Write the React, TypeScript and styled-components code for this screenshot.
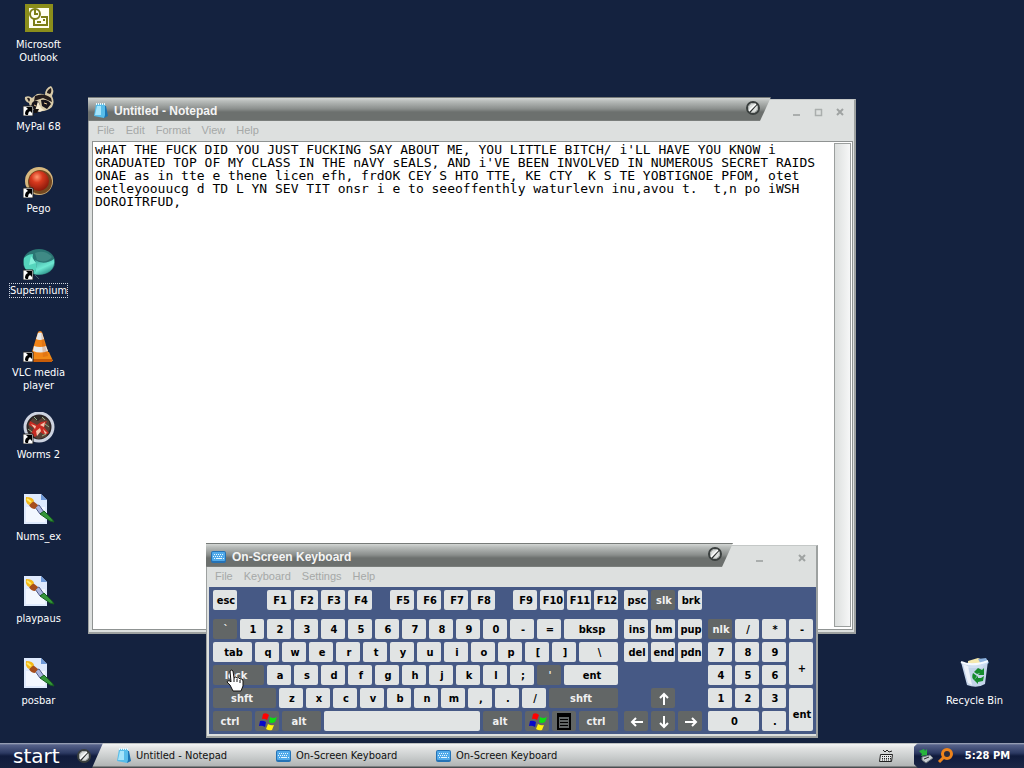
import React from "react";
import styled, { createGlobalStyle, css } from "styled-components";

const GlobalStyle = createGlobalStyle`
  * { box-sizing: border-box; }
  body { margin: 0; background: #14223f; }
  button, textarea { font: inherit; margin: 0; padding: 0; border: 0; }
`;

const uiFont = css`
  font-family: "DejaVu Sans Condensed", "DejaVu Sans", sans-serif;
`;

const Screen = styled.div`
  display: flex;
  flex-direction: column;
  min-height: 100vh;
  background: #14223f;
  font-size: 11px;
  line-height: 13px;
  ${uiFont}
`;

const Desktop = styled.main`
  position: relative;
  flex: 1;
  display: flex;
  justify-content: space-between;
  align-items: flex-start;
  padding: 2px 12px 3px 1px;
`;

const IconColumn = styled.div<{ $bottom?: boolean }>`
  display: flex;
  flex-direction: column;
  align-self: ${(p) => (p.$bottom ? "flex-end" : "flex-start")};
`;

const Shortcut = styled.button`
  width: 75px;
  height: 82px;
  display: flex;
  flex-direction: column;
  align-items: center;
  justify-content: flex-start;
  gap: 3px;
  background: none;
  color: #fff;
`;

const ShortcutLabel = styled.span<{ $focused?: boolean }>`
  border: 1px ${(p) => (p.$focused ? "dotted #cfd6e2" : "solid transparent")};
  text-align: center;
`;

const Window = styled.section`
  position: absolute;
  display: flex;
  flex-direction: column;
`;

const NotepadWindow = styled(Window)`
  left: 88px;
  top: 97px;
  width: 75%;
  height: 537px;
`;

const KeyboardWindow = styled(Window)`
  left: 206px;
  top: 543px;
`;

const Header = styled.header`
  display: flex;
  height: 24px;
`;

const TitleBar = styled.div`
  flex: 1;
  display: flex;
  align-items: center;
  gap: 5px;
  padding: 3px 10px 0 5px;
  clip-path: polygon(0 0, 100% 0, calc(100% - 11px) 100%, 0 100%);
  background: linear-gradient(#777b79 0, #777b79 1px, #d3d6d4 1px, #b9bdbb 4px, #8a8e8c 12px, #6c706e 15px, #6c706e 23px, #888c8a 24px);
`;

const Title = styled.h1`
  flex: 1;
  margin: 0;
  font: bold 12px/14px "Liberation Sans", Arial, sans-serif;
  color: #f4f4f4;
`;

const Emblem = styled.span`
  display: flex;
  align-self: flex-start;
`;

const Controls = styled.div`
  display: flex;
  align-items: center;
  justify-content: flex-end;
  gap: 8px;
  width: 97px;
  margin: 2px 0 0 -12px;
  padding: 2px 7px 0 0;
  background: #dde0df;
  border-top: 1px solid #c4c8c7;
  border-right: 2px solid #9da1a0;
`;

const ControlButton = styled.button<{ $wide?: boolean }>`
  display: flex;
  width: 14px;
  height: 14px;
  margin-right: ${(p) => (p.$wide ? 21 : 0)}px;
  background: none;
`;

const Frame = styled.div`
  flex: 1;
  display: flex;
  flex-direction: column;
  background: #dde0df;
  border: solid #9da1a0;
  border-width: 0 2px 2px 1px;
`;

const MenuBar = styled.nav`
  display: flex;
  align-items: center;
  gap: 11px;
  height: 20px;
  padding: 0 8px 2px;
`;

const MenuItem = styled.button`
  background: none;
  color: #a5a8a7;
  font: 11px/13px "Liberation Sans", Arial, sans-serif;
`;

const Editor = styled.div`
  flex: 1;
  display: flex;
  margin: 0 1px 2px 3px;
  background: #fff;
  border: 1px solid #8f9392;
`;

const TextBox = styled.textarea`
  flex: 1;
  min-width: 0;
  padding: 1px 0 0 2px;
  resize: none;
  outline: none;
  overflow: hidden;
  white-space: pre;
  background: #fff;
  color: #000;
  font: 13px/13px "DejaVu Sans Mono", monospace;
`;

const ScrollTrack = styled.div`
  width: 17px;
  margin: 1px 1px 2px 0;
  border: 1px solid #9b9f9e;
  background: linear-gradient(90deg, #dcdfde, #f6f7f7);
`;

const KeyBoard = styled.div`
  display: flex;
  gap: 6px;
  margin: 0 0 2px 2px;
  padding: 3px 3px 3px 4px;
  background: #465985;
`;

const Block = styled.div`
  display: flex;
  flex-direction: column;
  gap: 3px;
`;

const KeyRow = styled.div<{ $top?: boolean }>`
  display: flex;
  gap: 3px;
  height: 20px;
  margin-bottom: ${(p) => (p.$top ? 6 : 0)}px;
`;

const NumPad = styled.div`
  display: grid;
  grid-template-columns: repeat(4, 24px);
  grid-template-rows: repeat(5, 20px);
  gap: 3px;
  padding-top: 29px;
`;

const Key = styled.button<{ $w?: number; $dark?: boolean; $rows?: number; $cols?: number }>`
  display: flex;
  align-items: center;
  justify-content: center;
  flex: none;
  width: ${(p) => (p.$cols || p.$rows ? "auto" : `${p.$w ?? 24}px`)};
  grid-row: ${(p) => (p.$rows ? `span ${p.$rows}` : "auto")};
  grid-column: ${(p) => (p.$cols ? `span ${p.$cols}` : "auto")};
  padding: ${(p) => (p.$rows ? "10px 0 0 2px" : p.$dark && p.$w ? "1px 5px 0 0" : "1px 0 0 2px")};
  border-radius: 2px;
  background: ${(p) => (p.$dark ? "#626666" : "#e1e4e4")};
  color: ${(p) => (p.$dark ? "#f0f0f0" : "#000")};
  font-weight: bold;
  font-size: 11px;
  white-space: nowrap;
`;

const Spacer = styled.span<{ $w: number }>`
  flex: none;
  width: ${(p) => p.$w}px;
`;

const Pointer = styled.div`
  position: absolute;
  left: 226px;
  top: 669px;
`;

const Taskbar = styled.footer`
  display: flex;
  height: 25px;
  background: linear-gradient(#8d9291 0, #f2f4f4 1px, #e1e3e3 5px, #b1b5b5 23px, #4a4d50 24px);
`;

const StartButton = styled.button`
  display: flex;
  align-items: center;
  justify-content: space-between;
  width: 103px;
  padding: 0 11px 0 13px;
  clip-path: polygon(0 0, 100% 0, calc(100% - 11px) 100%, 0 100%);
  background: linear-gradient(#a9b0c0 0, #56628a 2px, #2c3962 10px, #101b3d 13px, #16213f 25px);
  color: #fff;
  font: 20px/20px "DejaVu Sans", sans-serif;
`;

const Tasks = styled.div`
  flex: 1;
  display: flex;
  padding-left: 13px;
`;

const Task = styled.button`
  display: flex;
  align-items: center;
  gap: 4px;
  width: 160px;
  background: none;
  color: #101010;
`;

const TrayTool = styled.button`
  display: flex;
  align-items: center;
  width: 35px;
  background: none;
`;

const Tray = styled.div`
  display: flex;
  align-items: center;
  gap: 3px;
  padding: 0 14px 0 5px;
  clip-path: polygon(4px 0, 100% 0, 100% 100%, 4px 100%, 0 calc(100% - 4px), 0 4px);
  background: linear-gradient(#a9b0c0 0, #56628a 2px, #2c3962 10px, #101b3d 13px, #1c2746 25px);
`;

const Clock = styled.time`
  margin-left: 8px;
  color: #fff;
  font-weight: bold;
`;

const Arrow = () => (
  <g>
    <path d="M0 22h10v10H0z" fill="#fff" stroke="#222" strokeWidth="1" />
    <path d="M2 30q0-4 3-5l-2-2h6v6l-2-2q-2 1-2 4H3z" fill="#000" />
  </g>
);

const Pic = ({ children }: { children: React.ReactNode }) => (
  <svg width="32" height="32" viewBox="0 0 32 32" aria-hidden="true">{children}</svg>
);

const OutlookIcon = () => (
  <Pic>
    <path d="M2 2h28v28H2z" fill="#8b8e1b" />
    <path d="M6 6h20v20H6z" fill="#fffff0" />
    <path d="M11 17v6h13v-8h-6" fill="#fffff0" stroke="#7d7f16" strokeWidth="2" />
    <circle cx="12" cy="12" r="5" fill="#fffff0" stroke="#7d7f16" strokeWidth="2" />
    <path d="M12 8v4h3M14 20h4M20 18h2" fill="none" stroke="#7d7f16" strokeWidth="2" />
  </Pic>
);

const RaccoonIcon = () => (
  <Pic>
    <path d="M14 10q5-1 8 1 0-7 6-9 4 4 1 10 3 6 0 11-5 5-14 4-8 0-9-8-5-2-4-6 4-2 7 1z" fill="#d8caa8" />
    <path d="M24 9q0-3 4-5 1 4-1 6zM4 14q3-1 3 2l-1 2zM12 12q9-4 16 2l1 4-9-4-9 3z" fill="#241c1c" />
    <path d="M9 19q3-4 7-1l1 5-5 3-4-3zM18 16q7-1 10 4l-4 5-5-3z" fill="#18141a" />
    <path d="M15 17l3 7 3 2-4 2-5-1z" fill="#f6ead0" />
    <path d="M11 25h5l-2 4h-3z" fill="#15100f" />
    <path d="M21 19l3 1M11 21l2 1" stroke="#f4d098" strokeWidth="1" />
    <Arrow />
  </Pic>
);

const PegoIcon = () => (
  <Pic>
    <defs>
      <radialGradient id="red" cx=".4" cy=".3" r=".7">
        <stop offset="0" stopColor="#ff9870" />
        <stop offset=".4" stopColor="#d8391e" />
        <stop offset="1" stopColor="#8a1a0c" />
      </radialGradient>
    </defs>
    <circle cx="16" cy="15" r="14" fill="#d7b87e" />
    <circle cx="17" cy="16" r="12" fill="#724720" />
    <circle cx="16" cy="15" r="10" fill="url(#red)" />
    <Arrow />
  </Pic>
);

const SupermiumIcon = () => (
  <Pic>
    <defs>
      <linearGradient id="teal" x2=".6" y2="1">
        <stop offset="0" stopColor="#3aa39a" />
        <stop offset=".6" stopColor="#6ee8d2" />
        <stop offset="1" stopColor="#2b9088" />
      </linearGradient>
    </defs>
    <ellipse cx="16" cy="14" rx="16" ry="13" fill="#2b7573" />
    <path d="M12 12q9 6 19-1 1 8-4 12-7 5-16 3 4-7 1-14z" fill="url(#teal)" />
    <path d="M1 10q4-4 9-4-1 6 3 9 1 7-2 11-9-2-10-9z" fill="#55d5bd" />
    <path d="M12 5q10-4 17 4-6 7-15 3z" fill="#3f8a85" />
    <path d="M8 8l-2 9 7-2" fill="#84f0da" />
    <path d="M12 27l4 4" stroke="#4a5f68" strokeWidth="1" />
    <Arrow />
  </Pic>
);

const VlcIcon = () => (
  <Pic>
    <path d="M9 22h17l4 9H6z" fill="#f08a17" />
    <path d="M7 29h22v3H6z" fill="#c95d08" />
    <path d="M15 2q2-2 4 0l7 23q-9 4-18 0z" fill="#f18418" />
    <path d="M15 3q2-1 4 0l2 6q-4 2-8 0zM11 16q6 2 12 0l2 5q-8 3-15 0z" fill="#e8eaeb" />
    <path d="M18 1l7 25-5 1z" fill="#b54d0a" opacity=".25" />
    <Arrow />
  </Pic>
);

const WormsIcon = () => (
  <Pic>
    <circle cx="16" cy="15" r="14" fill="#2b2423" stroke="#cdd3e0" strokeWidth="3" />
    <path d="M5 12l5-6 5 3 5-4 6 4 1 8-4 8-8 2-7-4z" fill="#574036" />
    <path d="M7 9l7 4 4-3 6-1-3 6 5 6-4 2-5-3-5 5-4-3 3-6-5-3z" fill="#c72b22" />
    <path d="M8 12l5 2-1 3zM17 13l5-3-1 5zM13 19l4-3 1 3-4 5zM20 17l4 4-2 1z" fill="#f4c5ae" />
    <path d="M11 5l3 3M22 12l4 3M19 24l4-2M5 17l4 3M19 5l3 3" stroke="#8fae86" strokeWidth="1" />
    <Arrow />
  </Pic>
);

const PaintIcon = () => (
  <Pic>
    <path d="M1 0h17l6 6v24H1z" fill="#dfeafd" />
    <path d="M3 13h19v15H3z" fill="#f3f7ff" />
    <path d="M18 0l6 6h-6z" fill="#6e99d8" />
    <path d="M12 13l4-2 5 7-4 2z" fill="#aab4de" stroke="#505b88" />
    <path d="M17 20l4-3 8 8 2 3-4-1z" fill="#35953a" stroke="#17601f" />
    <path d="M6 11l4-4 5 4-3 4q-4 0-6-4z" fill="#a64d1d" />
    <path d="M3 3q7 0 8 4l-5 4Q2 9 3 3z" fill="#f4b818" />
    <path d="M4 5l4 3" stroke="#ffe96b" strokeWidth="2" />
  </Pic>
);

const BinIcon = () => (
  <Pic>
    <path d="M9 3l10-3 8 3-4 7H9z" fill="#f6e9ae" />
    <path d="M19 1l8-1 3 5-7 3z" fill="#8bb1dd" />
    <path d="M2 4q11 4 27-1l-3 23q-8 5-18 1z" fill="#cfdff4" fillOpacity=".94" />
    <path d="M4 6l5 19 4 2-4-19z" fill="#fff" opacity=".7" />
    <path d="M2 4q11 5 27-1" stroke="#f6faff" strokeWidth="2" fill="none" />
    <path d="M15 14l4-4 4 2 2-2v7h-6l2-2-3 1zM25 18l-1 5-5 1v2l-4-4 4-4v2h3zM14 15l4 3-3 4q-3-2-1-7z" fill="#158b2d" />
  </Pic>
);

const NotepadIcon = () => (
  <svg width="16" height="16" viewBox="0 0 16 16" aria-hidden="true">
    <path d="M11 3h2l2 10-4 2z" fill="#1b74b4" />
    <path d="M3 1h9v11l-1 3-10-2z" fill="#58bdea" />
    <path d="M4 3h4v9H2z" fill="#a5e4fa" />
    <path d="M3 1h9" stroke="#e5f9ff" strokeDasharray="1 1" strokeWidth="2" />
  </svg>
);

const KeyboardIcon = () => (
  <svg width="16" height="16" viewBox="0 0 16 16" aria-hidden="true">
    <rect x="0" y="2" width="15" height="12" rx="2" fill="#2572b5" />
    <rect x="1" y="3" width="13" height="9" rx="1" fill="#51aaea" />
    <path d="M3 5.500h10M2 7.500h10M3 9.500h1M12 9.500h1" stroke="#e7f7ff" strokeDasharray="1 1" />
    <path d="M5 9.500h6" stroke="#e7f7ff" />
  </svg>
);

const RingIcon = () => (
  <svg width="16" height="16" viewBox="0 0 16 16" aria-hidden="true">
    <circle cx="8" cy="8" r="6" fill="#dfe2e0" stroke="#3a3f3e" strokeWidth="2" />
    <circle cx="8" cy="8" r="4.500" fill="none" stroke="#a9adab" />
    <path d="M5 12l7-8" stroke="#2c302f" strokeWidth="1.500" />
    <path d="M4 11l7-7" stroke="#fff" strokeWidth="1.500" />
  </svg>
);

const FlagIcon = () => (
  <svg width="20" height="20" viewBox="0 0 20 20" aria-hidden="true">
    <path d="M5 2q3-2 6 1L9 8q-3-2-5-1z" fill="#f00" />
    <path d="M12 5q3 2 7 0l-2 5q-4 2-6 0z" fill="#0cdd12" />
    <path d="M2 9q3-1 6 1l-1 5q-3-2-6-1z" fill="#0709c9" />
    <path d="M10 12q3 2 6 1l-2 5q-3 1-6-1z" fill="#fff20a" />
  </svg>
);

const MenuKeyIcon = () => (
  <svg width="16" height="17" viewBox="0 0 16 17" aria-hidden="true">
    <path d="M1 1h12v15H1z" fill="#626666" stroke="#000" strokeWidth="2" />
    <path d="M2 3h10" stroke="#000" strokeWidth="2" />
    <path d="M3 6.500h8M3 9.500h8M3 12.500h8" stroke="#000" strokeWidth="1" />
  </svg>
);

const ArrowKeyIcon = ({ turn }: { turn: number }) => (
  <svg width="14" height="14" viewBox="0 0 14 14" aria-hidden="true">
    <path d="M7 13V2M3 6l4-4 4 4" transform={`rotate(${turn} 7 7)`} fill="none" stroke="#fff" strokeWidth="2" />
  </svg>
);

const HandIcon = () => (
  <svg width="19" height="24" viewBox="0 0 19 24" aria-hidden="true">
    <path d="M4 2q2-2 3 0l1 7q2-2 3 0 2-1 3 1 3-1 3 2v5l-2 5H7l-3-6-3-3q0-2 3-1l1 1z" fill="#fff" stroke="#111" strokeWidth="1" />
    <path d="M8 9v4M11 10v3M14 11v3" stroke="#111" />
  </svg>
);

const MinGlyph = () => <svg width="14" height="14" aria-hidden="true"><path d="M4 10h7" stroke="#aaaead" strokeWidth="2" /></svg>;
const MaxGlyph = () => <svg width="14" height="14" aria-hidden="true"><path d="M4.500 4v6.500h6V4M4 4.500h7" fill="none" stroke="#aaaead" strokeWidth="1.500" /></svg>;
const CloseGlyph = () => <svg width="14" height="14" aria-hidden="true"><path d="M4 4l6 6M10 4l-6 6" stroke="#9fa3a2" strokeWidth="2" /></svg>;

type KeyDef = { t: React.ReactNode; w?: number; dark?: boolean; gap?: boolean; label?: string; rows?: number; cols?: number };
const plain = (s: string): KeyDef[] => s.split(" ").map((t) => ({ t }));
const gap = (w: number): KeyDef => ({ t: "", w, gap: true });

const mainRows: KeyDef[][] = [
  [{ t: "esc" }, gap(24), ...plain("F1 F2 F3 F4"), gap(12), ...plain("F5 F6 F7 F8"), gap(12), ...plain("F9 F10 F11 F12")],
  [{ t: "`", dark: true }, ...plain("1 2 3 4 5 6 7 8 9 0 - ="), { t: "bksp", w: 54 }],
  [{ t: "tab", w: 39 }, ...plain("q w e r t y u i o p [ ]"), { t: "\\", w: 39 }],
  [{ t: "lock", w: 51, dark: true }, ...plain("a s d f g h j k l ;"), { t: "'", dark: true }, { t: "ent", w: 54 }],
  [{ t: "shft", w: 63, dark: true }, ...plain("z x c v b n m , . /"), { t: "shft", w: 69, dark: true }],
  [
    { t: "ctrl", w: 39, dark: true },
    { t: <FlagIcon />, dark: true, label: "Windows" },
    { t: "alt", w: 39, dark: true },
    { t: "", w: 156, label: "Space" },
    { t: "alt", w: 39, dark: true },
    { t: <FlagIcon />, dark: true, label: "Windows" },
    { t: <MenuKeyIcon />, dark: true, label: "Menu" },
    { t: "ctrl", w: 39, dark: true },
  ],
];

const navRows: KeyDef[][] = [
  [{ t: "psc" }, { t: "slk", dark: true }, { t: "brk" }],
  plain("ins hm pup"),
  plain("del end pdn"),
  [],
  [gap(24), { t: <ArrowKeyIcon turn={0} />, dark: true, label: "Up" }],
  [
    { t: <ArrowKeyIcon turn={270} />, dark: true, label: "Left" },
    { t: <ArrowKeyIcon turn={180} />, dark: true, label: "Down" },
    { t: <ArrowKeyIcon turn={90} />, dark: true, label: "Right" },
  ],
];

const numKeys: KeyDef[] = [
  { t: "nlk", dark: true }, ...plain("/ * -"),
  ...plain("7 8 9"), { t: "+", rows: 2 },
  ...plain("4 5 6"),
  ...plain("1 2 3"), { t: "ent", rows: 2 },
  { t: "0", cols: 2 }, { t: "." },
];

const renderKey = (k: KeyDef, i: number) =>
  k.gap ? (
    <Spacer key={i} $w={k.w ?? 24} />
  ) : (
    <Key key={i} $w={k.w} $dark={k.dark} $rows={k.rows} $cols={k.cols} aria-label={k.label}>{k.t}</Key>
  );

const Rows = ({ rows }: { rows: KeyDef[][] }) => (
  <Block>
    {rows.map((r, i) => <KeyRow key={i} $top={i === 0}>{r.map(renderKey)}</KeyRow>)}
  </Block>
);

const note = `wHAT THE FUCK DID YOU JUST FUCKING SAY ABOUT ME, YOU LITTLE BITCH/ i'LL HAVE YOU KNOW i
GRADUATED TOP OF MY CLASS IN THE nAVY sEALS, AND i'VE BEEN INVOLVED IN NUMEROUS SECRET RAIDS
ONAE as in tte e thene licen efh, frdOK CEY S HTO TTE, KE CTY  K S TE YOBTIGNOE PFOM, otet
eetleyoouucg d TD L YN SEV TIT onsr i e to seeoffenthly waturlevn inu,avou t.  t,n po iWSH
DOROITRFUD,`;

const shortcuts = [
  { name: "Microsoft Outlook", icon: <OutlookIcon /> },
  { name: "MyPal 68", icon: <RaccoonIcon /> },
  { name: "Pego", icon: <PegoIcon /> },
  { name: "Supermium", icon: <SupermiumIcon />, focused: true },
  { name: "VLC media player", icon: <VlcIcon /> },
  { name: "Worms 2", icon: <WormsIcon /> },
  { name: "Nums_ex", icon: <PaintIcon /> },
  { name: "playpaus", icon: <PaintIcon /> },
  { name: "posbar", icon: <PaintIcon /> },
];

const WindowHeader = ({ title, icon, max }: { title: string; icon: React.ReactNode; max?: boolean }) => (
  <Header>
    <TitleBar>
      {icon}
      <Title>{title}</Title>
      <Emblem><RingIcon /></Emblem>
    </TitleBar>
    <Controls>
      <ControlButton $wide={!max} aria-label="Minimize"><MinGlyph /></ControlButton>
      {max && <ControlButton aria-label="Maximize"><MaxGlyph /></ControlButton>}
      <ControlButton aria-label="Close"><CloseGlyph /></ControlButton>
    </Controls>
  </Header>
);

const Menu = ({ items }: { items: string[] }) => (
  <MenuBar>{items.map((m) => <MenuItem key={m}>{m}</MenuItem>)}</MenuBar>
);

export default function App() {
  return (
    <Screen>
      <GlobalStyle />
      <Desktop>
        <IconColumn>
          {shortcuts.map((s) => (
            <Shortcut key={s.name}>
              {s.icon}
              <ShortcutLabel $focused={s.focused}>{s.name}</ShortcutLabel>
            </Shortcut>
          ))}
        </IconColumn>
        <IconColumn $bottom>
          <Shortcut>
            <BinIcon />
            <ShortcutLabel>Recycle Bin</ShortcutLabel>
          </Shortcut>
        </IconColumn>

        <NotepadWindow>
          <WindowHeader title="Untitled - Notepad" icon={<NotepadIcon />} max />
          <Frame>
            <Menu items={["File", "Edit", "Format", "View", "Help"]} />
            <Editor>
              <TextBox aria-label="Document text" defaultValue={note} spellCheck={false} />
              <ScrollTrack />
            </Editor>
          </Frame>
        </NotepadWindow>

        <KeyboardWindow>
          <WindowHeader title="On-Screen Keyboard" icon={<KeyboardIcon />} />
          <Frame>
            <Menu items={["File", "Keyboard", "Settings", "Help"]} />
            <KeyBoard>
              <Rows rows={mainRows} />
              <Rows rows={navRows} />
              <NumPad>{numKeys.map(renderKey)}</NumPad>
            </KeyBoard>
          </Frame>
        </KeyboardWindow>

        <Pointer><HandIcon /></Pointer>
      </Desktop>

      <Taskbar>
        <StartButton>start<RingIcon /></StartButton>
        <Tasks>
          <Task><NotepadIcon />Untitled - Notepad</Task>
          <Task><KeyboardIcon />On-Screen Keyboard</Task>
          <Task><KeyboardIcon />On-Screen Keyboard</Task>
        </Tasks>
        <TrayTool aria-label="Input options">
          <svg width="15" height="14" viewBox="0 0 15 14" aria-hidden="true">
            <path d="M4 1l2 2 2-2 2 2 3-1" fill="none" stroke="#222" />
            <path d="M1.500 5.500h12l-1 7h-12z" fill="#e5e7e7" stroke="#222" />
            <path d="M3 7.500h9M3 9.500h9M3 11h9" stroke="#222" strokeDasharray="1 1" />
          </svg>
        </TrayTool>
        <Tray>
          <svg width="15" height="16" viewBox="0 0 15 16" aria-hidden="true">
            <path d="M3 9l8-2 3 3-7 5-4-3z" fill="#c7cdd2" stroke="#6d757c" />
            <path d="M0 3l5-2 1 2 2-2v6l-6 1 1-2z" fill="#27b43c" />
            <path d="M5 11l5-2" stroke="#222" />
          </svg>
          <svg width="17" height="16" viewBox="0 0 17 16" aria-hidden="true">
            <circle cx="10" cy="6" r="4.500" fill="#2a2c3e" stroke="#ee841c" strokeWidth="3" />
            <path d="M7 9l-5 5" stroke="#ee841c" strokeWidth="3" />
          </svg>
          <Clock>5:28 PM</Clock>
        </Tray>
      </Taskbar>
    </Screen>
  );
}
